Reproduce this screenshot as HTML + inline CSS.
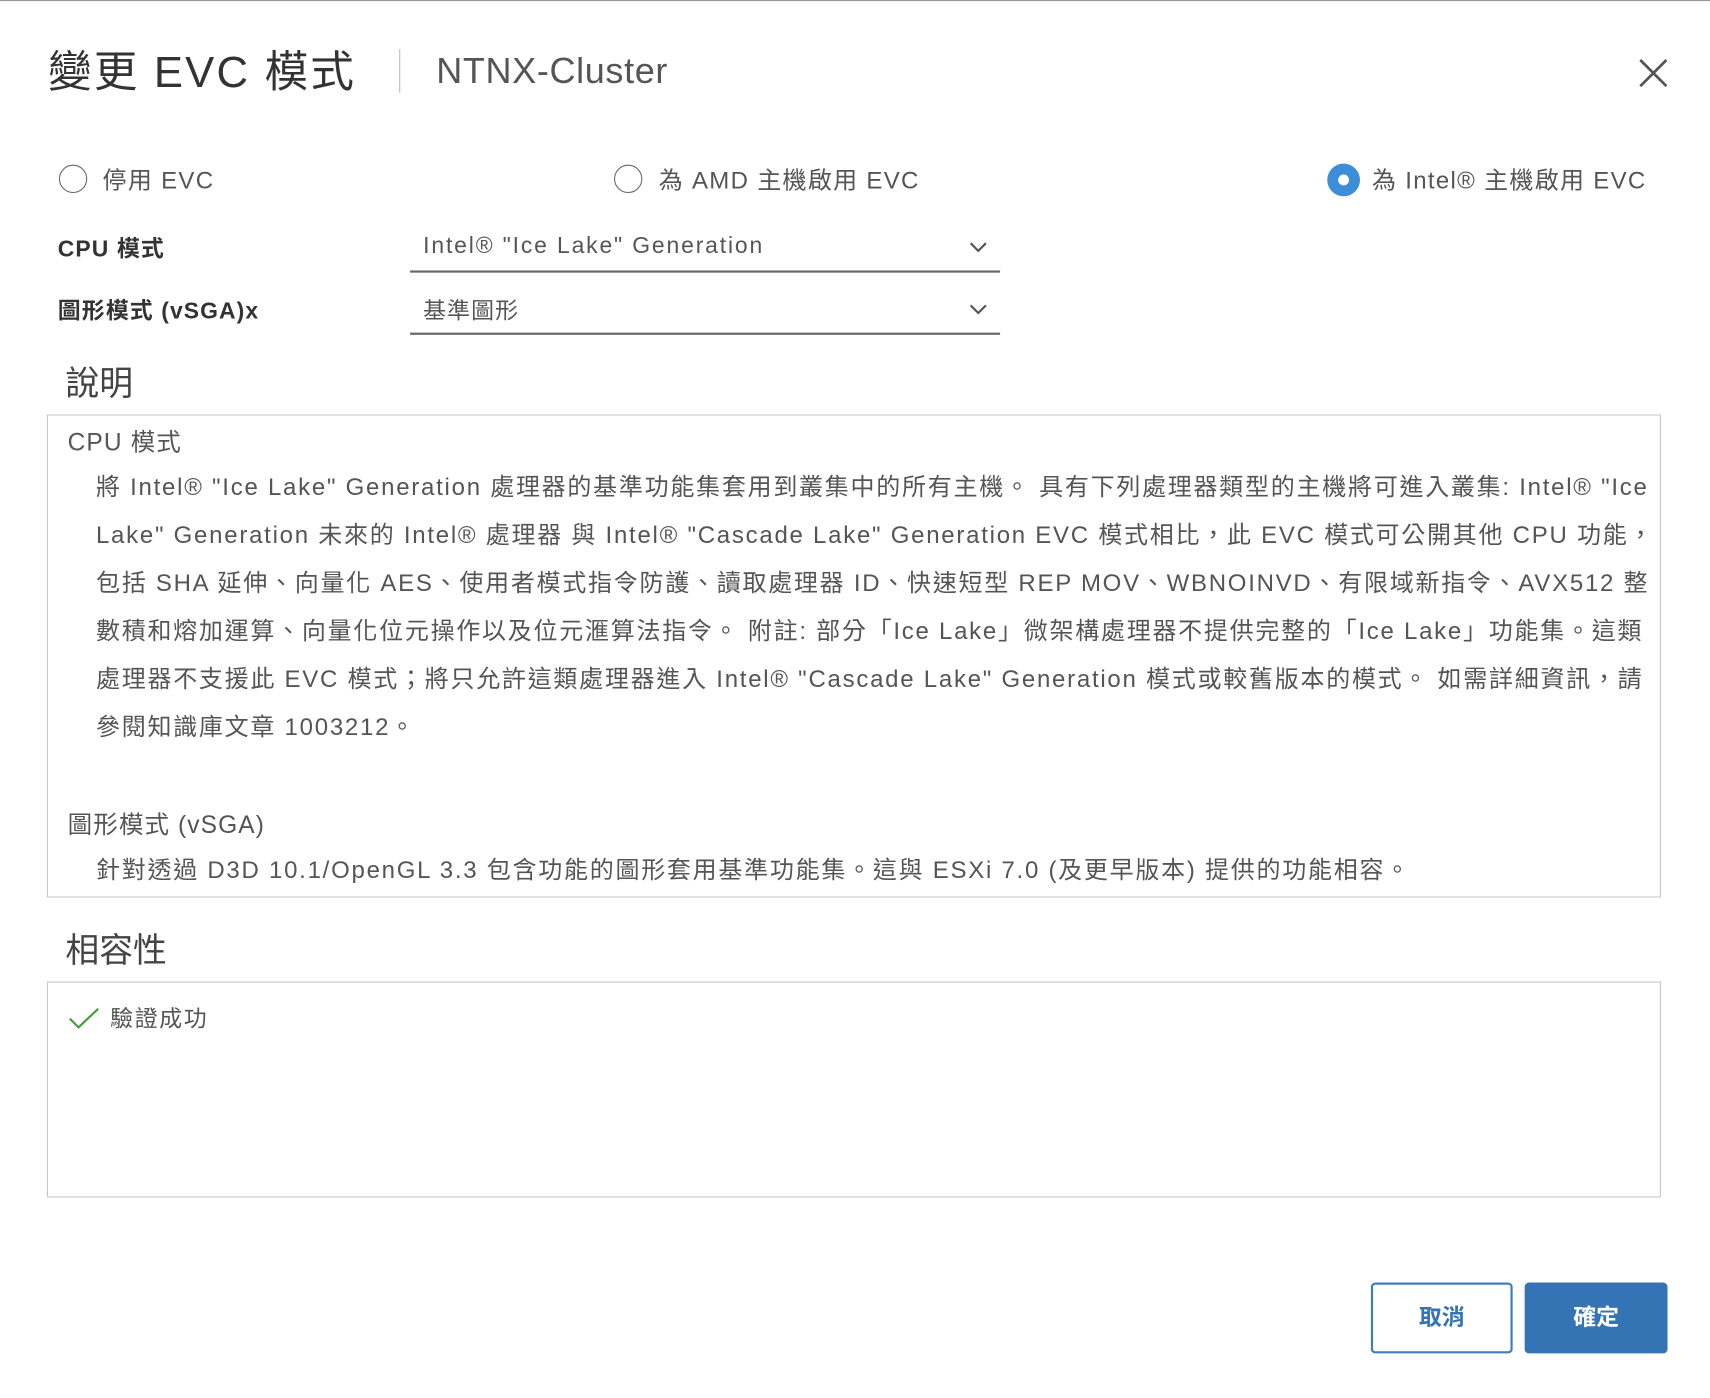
<!DOCTYPE html>
<html><head><meta charset="utf-8">
<style>
html,body{margin:0;padding:0;background:#fff;overflow:hidden;width:1710px;height:1398px}
#w{position:absolute;left:0;top:0;width:1568px;height:1282px;transform:scale(1.0906);transform-origin:0 0;font-family:"Liberation Sans","Noto Sans CJK TC",sans-serif;color:#555}
.a{position:absolute;white-space:nowrap}
.rad{position:absolute;width:26px;height:26px;border:1.5px solid #666;border-radius:50%;box-sizing:border-box}
.sel{position:absolute;left:376px;width:541px;border-bottom:2px solid #666;height:40px}
.box{position:absolute;left:43px;width:1480px;border:1.5px solid #c8c8c8;box-sizing:border-box}
.p{position:absolute;left:88px;font-size:22px;color:#555;line-height:44px;white-space:nowrap;letter-spacing:1.6px}
.r{font-size:22px;letter-spacing:1.2px}
</style></head><body><div id="w">
<div style="position:absolute;left:0;top:0;width:1568px;height:1px;background:#999"></div>
<div class="a" style="left:44px;top:34px;font-size:40px;color:#333;letter-spacing:2px">變更 EVC 模式</div>
<div style="position:absolute;left:366px;top:45px;width:1px;height:40px;background:#bbb"></div>
<div class="a" style="left:400px;top:46px;font-size:33px;color:#555;letter-spacing:0.6px">NTNX-Cluster</div>
<svg style="position:absolute;left:1502px;top:53px" width="28" height="28"><path d="M2 2L26 26M26 2L2 26" stroke="#555" stroke-width="2.5"/></svg>

<div class="rad" style="left:54px;top:151px"></div>
<div class="a r" style="left:94px;top:148px">停用 EVC</div>
<div class="rad" style="left:563px;top:151px"></div>
<div class="a r" style="left:604px;top:148px">為 AMD 主機啟用 EVC</div>
<div style="position:absolute;left:1217px;top:150px;width:30px;height:30px;border-radius:50%;background:#3d8ed8"></div>
<div style="position:absolute;left:1227px;top:160px;width:10px;height:10px;border-radius:50%;background:#fff"></div>
<div class="a r" style="left:1258px;top:148px">為 Intel® 主機啟用 EVC</div>

<div class="a" style="left:53px;top:212px;font-size:21px;font-weight:bold;color:#333;letter-spacing:1px">CPU 模式</div>
<div class="sel" style="top:208px"></div>
<div class="a" style="left:388px;top:214px;font-size:21px;letter-spacing:1.7px">Intel® "Ice Lake" Generation</div>
<svg style="position:absolute;left:889px;top:221px" width="16" height="12"><path d="M1 2L8 9L15 2" stroke="#555" stroke-width="2" fill="none"/></svg>
<div class="a" style="left:53px;top:269px;font-size:21px;font-weight:bold;color:#333;letter-spacing:1px">圖形模式 (vSGA)x</div>
<div class="sel" style="top:265px"></div>
<div class="a" style="left:388px;top:269px;font-size:21px;letter-spacing:1px">基準圖形</div>
<svg style="position:absolute;left:889px;top:278px" width="16" height="12"><path d="M1 2L8 9L15 2" stroke="#555" stroke-width="2" fill="none"/></svg>

<div class="a" style="left:60px;top:326px;font-size:31px;color:#444">說明</div>
<div class="box" style="top:380px;height:443px"></div>
<div class="a" style="left:62px;top:388px;font-size:22.5px;letter-spacing:1px">CPU 模式</div>
<div class="p" style="top:425px">將 Intel® "Ice Lake" Generation 處理器的基準功能集套用到叢集中的所有主機。 具有下列處理器類型的主機將可進入叢集: Intel® "Ice<br>Lake" Generation 未來的 Intel® 處理器 與 Intel® "Cascade Lake" Generation EVC 模式相比，此 EVC 模式可公開其他 CPU 功能，<br>包括 SHA 延伸、向量化 AES、使用者模式指令防護、讀取處理器 ID、快速短型 REP MOV、WBNOINVD、有限域新指令、AVX512 整<br>數積和熔加運算、向量化位元操作以及位元滙算法指令。 附註: 部分「Ice Lake」微架構處理器不提供完整的「Ice Lake」功能集。這類<br>處理器不支援此 EVC 模式；將只允許這類處理器進入 Intel® "Cascade Lake" Generation 模式或較舊版本的模式。 如需詳細資訊，請<br>參閱知識庫文章 1003212。</div>
<div class="a" style="left:62px;top:739px;font-size:22.5px;letter-spacing:1px">圖形模式 (vSGA)</div>
<div class="p" style="top:776px">針對透過 D3D 10.1/OpenGL 3.3 包含功能的圖形套用基準功能集。這與 ESXi 7.0 (及更早版本) 提供的功能相容。</div>

<div class="a" style="left:60px;top:846px;font-size:31px;color:#444">相容性</div>
<div class="box" style="top:900px;height:198px"></div>
<svg style="position:absolute;left:62px;top:923px" width="30" height="22"><path d="M2 11L10 19L28 2" stroke="#4a9a3e" stroke-width="2" fill="none"/></svg>
<div class="a" style="left:101px;top:918px;font-size:21px;letter-spacing:1.5px">驗證成功</div>

<div style="position:absolute;left:1257px;top:1176px;width:130px;height:65px;border:2px solid #3b7dbf;border-radius:4px;box-sizing:border-box;color:#3574b4;font-size:21px;text-align:center;line-height:61px;font-weight:bold">取消</div>
<div style="position:absolute;left:1398px;top:1176px;width:131px;height:65px;background:#3574b4;border-radius:4px;color:#fff;font-size:21px;text-align:center;line-height:65px;font-weight:bold">確定</div>
</div></body></html>
